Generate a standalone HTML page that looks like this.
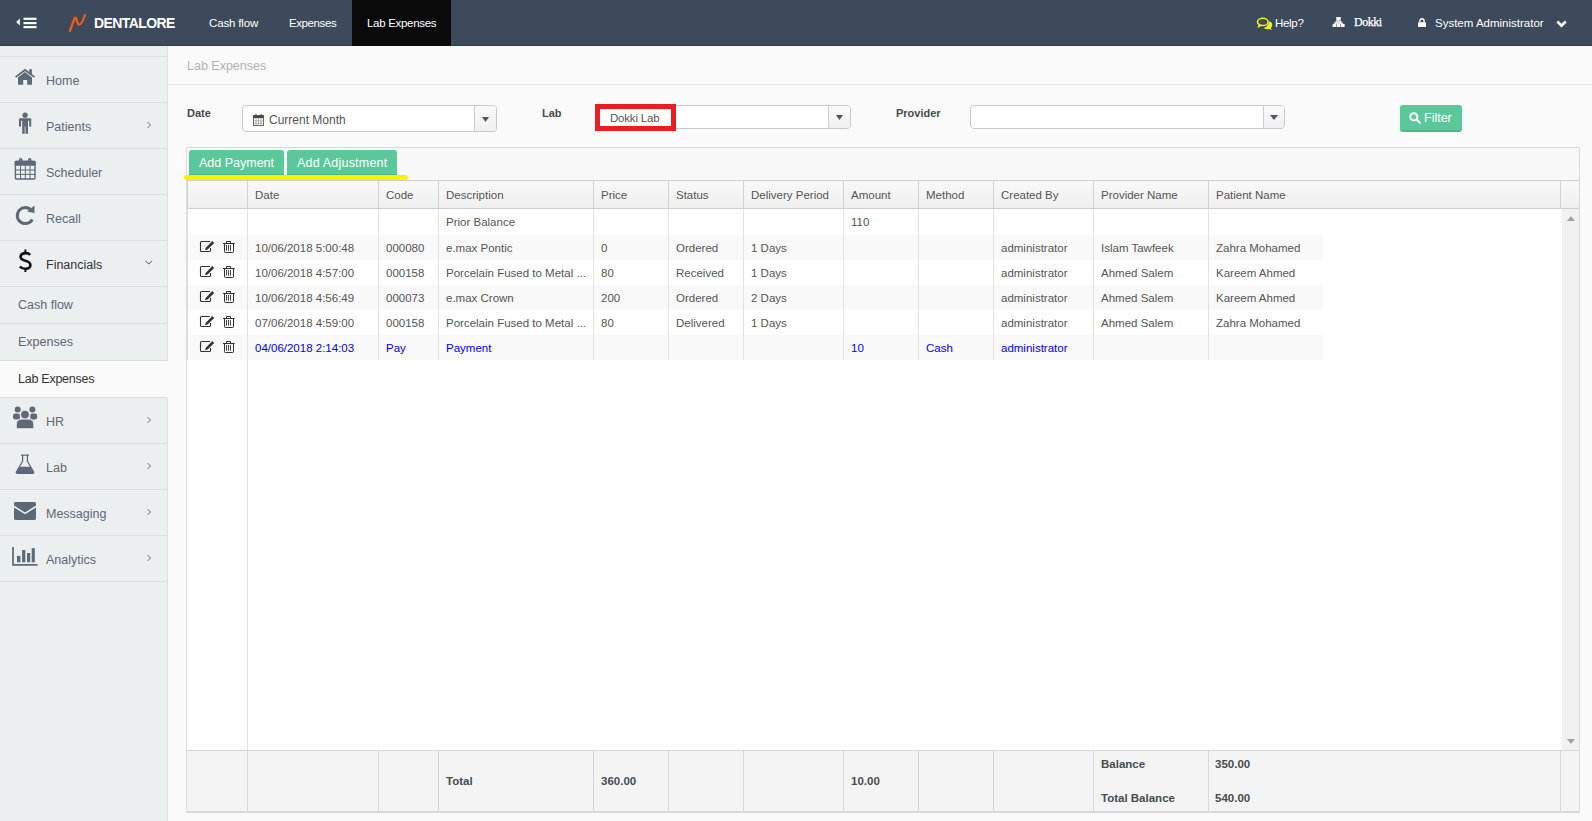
<!DOCTYPE html>
<html><head><meta charset="utf-8">
<style>
*{box-sizing:border-box;margin:0;padding:0}
html,body{width:1592px;height:821px;overflow:hidden}
body{background:#fafafa;font-family:"Liberation Sans",sans-serif;position:relative}
.abs{position:absolute}
svg.abs{display:block;overflow:visible}
.t{position:absolute;white-space:nowrap;line-height:1}
</style></head><body>
<div class="abs" style="left:0px;top:0px;width:1592px;height:45px;background:#3d4a5c;"></div>
<div class="abs" style="left:0px;top:45px;width:1592px;height:1px;background:#323d4c;"></div>
<div class="abs" style="left:352px;top:0px;width:99px;height:46px;background:#0a0a0a;"></div>
<svg class="abs" style="left:16px;top:17px" width="22" height="12" viewBox="0 0 22 12">
<path d="M0.2 5 L3.8 1.5 V8.5 Z" fill="#fff"/>
<rect x="7.5" y="0.7" width="13" height="2.2" fill="#fff"/>
<rect x="7.5" y="5" width="13" height="2.2" fill="#fff"/>
<rect x="7.5" y="9" width="13" height="2.2" fill="#fff"/></svg>
<svg class="abs" style="left:64px;top:10px" width="28" height="26" viewBox="0 0 28 26">
<path d="M5.9 21 L10.4 8.6 C10.9 7.3 12 7.3 12.4 8.8 C13 11.5 13.6 14.6 15.2 14.6 C17.6 14.6 19.6 9 20.9 5" stroke="#f25a14" stroke-width="2.3" fill="none" stroke-linecap="round" stroke-linejoin="round"/></svg>
<div class="t" style="left:94px;top:16.15px;font-size:14px;color:#fff;font-weight:bold;font-family:'Liberation Sans',sans-serif;letter-spacing:-0.6px">DENTALORE</div>
<div class="t" style="left:209px;top:18.27px;font-size:11.5px;color:#fff;font-weight:normal;font-family:'Liberation Sans',sans-serif;letter-spacing:-0.15px">Cash flow</div>
<div class="t" style="left:289px;top:18.27px;font-size:11.5px;color:#fff;font-weight:normal;font-family:'Liberation Sans',sans-serif;letter-spacing:-0.4px">Expenses</div>
<div class="t" style="left:367px;top:18.27px;font-size:11.5px;color:#fff;font-weight:normal;font-family:'Liberation Sans',sans-serif;letter-spacing:-0.3px">Lab Expenses</div>
<svg class="abs" style="left:1256px;top:17px" width="17" height="14" viewBox="0 0 17 14">
<path d="M7.5 11.3 C9.5 12.3 12 12.4 13.3 12 L15.6 13.2 L14.9 11 C16.1 10 16.4 8.5 16.1 7 C15.7 5.5 14.6 4.4 13.1 3.9 C13.2 7 11 10 7.5 11.3 Z" fill="#eef21a"/>
<ellipse cx="6.8" cy="4.9" rx="5.3" ry="3.6" stroke="#eef21a" stroke-width="1.6" fill="none"/>
<path d="M2.6 7.3 L1.4 11 L6 8.7 Z" fill="#eef21a"/>
</svg>
<div class="t" style="left:1275px;top:18.27px;font-size:11.5px;color:#fff;font-weight:normal;font-family:'Liberation Sans',sans-serif;letter-spacing:-0.3px">Help?</div>
<svg class="abs" style="left:1332px;top:17px" width="13" height="10" viewBox="0 0 13 10">
<rect x="4.3" y="0" width="4.4" height="3.6" fill="#fff"/>
<path d="M4.3 3.6 H8.7 L11.5 7 H1.5 Z" fill="#dfe2e8"/>
<rect x="0.6" y="7" width="3.6" height="3" fill="#fff"/><rect x="4.7" y="7" width="3.6" height="3" fill="#fff"/><rect x="8.8" y="7" width="3.8" height="3" fill="#fff"/>
</svg>
<div class="t" style="left:1354px;top:15.84px;font-size:12px;color:#fff;font-weight:normal;font-family:'Liberation Serif',serif;letter-spacing:-0.45px;-webkit-text-stroke:0.25px #fff">Dokki</div>
<svg class="abs" style="left:1418px;top:18px" width="8" height="10" viewBox="0 0 8 10">
<path d="M1.9 4.5 V3 C1.9 1.4 2.8 0.7 4 0.7 C5.2 0.7 6.1 1.4 6.1 3 V4.5" stroke="#fff" stroke-width="1.4" fill="none"/>
<rect x="0" y="4.2" width="8" height="4.9" rx="0.6" fill="#fff"/></svg>
<div class="t" style="left:1435px;top:18.27px;font-size:11.5px;color:#fff;font-weight:normal;font-family:'Liberation Sans',sans-serif;">System Administrator</div>
<svg class="abs" style="left:1556px;top:20px" width="11" height="8" viewBox="0 0 11 8">
<path d="M1.3 1.5 L5.5 5.7 L9.7 1.5" stroke="#fff" stroke-width="2.6" fill="none"/></svg>
<div class="abs" style="left:0px;top:46px;width:167px;height:775px;background:#ebeff0;"></div>
<div class="abs" style="left:167px;top:46px;width:1px;height:775px;background:#dde1e4;"></div>
<div class="abs" style="left:0px;top:56px;width:167px;height:1px;background:#dadee1;"></div>
<div class="abs" style="left:0px;top:102px;width:167px;height:1px;background:#dadee1;"></div>
<div class="t" style="left:46px;top:75.42px;font-size:12.5px;color:#5f6875;font-weight:normal;font-family:'Liberation Sans',sans-serif;">Home</div>
<div class="abs" style="left:0px;top:148px;width:167px;height:1px;background:#dadee1;"></div>
<div class="t" style="left:46px;top:121.42px;font-size:12.5px;color:#5f6875;font-weight:normal;font-family:'Liberation Sans',sans-serif;">Patients</div>
<div class="abs" style="left:0px;top:194px;width:167px;height:1px;background:#dadee1;"></div>
<div class="t" style="left:46px;top:167.42px;font-size:12.5px;color:#5f6875;font-weight:normal;font-family:'Liberation Sans',sans-serif;">Scheduler</div>
<div class="abs" style="left:0px;top:240px;width:167px;height:1px;background:#dadee1;"></div>
<div class="t" style="left:46px;top:213.42px;font-size:12.5px;color:#5f6875;font-weight:normal;font-family:'Liberation Sans',sans-serif;">Recall</div>
<div class="abs" style="left:0px;top:286px;width:167px;height:1px;background:#dadee1;"></div>
<div class="t" style="left:46px;top:259.42px;font-size:12.5px;color:#333;font-weight:normal;font-family:'Liberation Sans',sans-serif;">Financials</div>
<div class="abs" style="left:0px;top:323px;width:167px;height:1px;background:#dadee1;"></div>
<div class="abs" style="left:0px;top:360px;width:167px;height:1px;background:#dadee1;"></div>
<div class="abs" style="left:0px;top:361px;width:168px;height:36px;background:#fafafa;"></div>
<div class="abs" style="left:0px;top:397px;width:167px;height:1px;background:#dadee1;"></div>
<div class="t" style="left:18px;top:299.42px;font-size:12.5px;color:#5f6875;font-weight:normal;font-family:'Liberation Sans',sans-serif;">Cash flow</div>
<div class="t" style="left:18px;top:336.42px;font-size:12.5px;color:#5f6875;font-weight:normal;font-family:'Liberation Sans',sans-serif;">Expenses</div>
<div class="t" style="left:18px;top:373.42px;font-size:12.5px;color:#333;font-weight:normal;font-family:'Liberation Sans',sans-serif;letter-spacing:-0.25px">Lab Expenses</div>
<div class="abs" style="left:0px;top:443px;width:167px;height:1px;background:#dadee1;"></div>
<div class="t" style="left:46px;top:416.42px;font-size:12.5px;color:#5f6875;font-weight:normal;font-family:'Liberation Sans',sans-serif;">HR</div>
<div class="abs" style="left:0px;top:489px;width:167px;height:1px;background:#dadee1;"></div>
<div class="t" style="left:46px;top:462.42px;font-size:12.5px;color:#5f6875;font-weight:normal;font-family:'Liberation Sans',sans-serif;">Lab</div>
<div class="abs" style="left:0px;top:535px;width:167px;height:1px;background:#dadee1;"></div>
<div class="t" style="left:46px;top:508.42px;font-size:12.5px;color:#5f6875;font-weight:normal;font-family:'Liberation Sans',sans-serif;">Messaging</div>
<div class="abs" style="left:0px;top:581px;width:167px;height:1px;background:#dadee1;"></div>
<div class="t" style="left:46px;top:554.42px;font-size:12.5px;color:#5f6875;font-weight:normal;font-family:'Liberation Sans',sans-serif;">Analytics</div>
<svg class="abs" style="left:146px;top:121px" width="6" height="8" viewBox="0 0 6 8"><path d="M1.5 1 L4.5 4 L1.5 7" stroke="#5f6876" stroke-width="0.95" fill="none"/></svg>
<svg class="abs" style="left:146px;top:416px" width="6" height="8" viewBox="0 0 6 8"><path d="M1.5 1 L4.5 4 L1.5 7" stroke="#5f6876" stroke-width="0.95" fill="none"/></svg>
<svg class="abs" style="left:146px;top:462px" width="6" height="8" viewBox="0 0 6 8"><path d="M1.5 1 L4.5 4 L1.5 7" stroke="#5f6876" stroke-width="0.95" fill="none"/></svg>
<svg class="abs" style="left:146px;top:508px" width="6" height="8" viewBox="0 0 6 8"><path d="M1.5 1 L4.5 4 L1.5 7" stroke="#5f6876" stroke-width="0.95" fill="none"/></svg>
<svg class="abs" style="left:146px;top:554px" width="6" height="8" viewBox="0 0 6 8"><path d="M1.5 1 L4.5 4 L1.5 7" stroke="#5f6876" stroke-width="0.95" fill="none"/></svg>
<svg class="abs" style="left:145px;top:260px" width="8" height="6" viewBox="0 0 8 6"><path d="M0.7 0.9 L3.7 4.1 L6.9 0.9" stroke="#3f4654" stroke-width="0.95" fill="none"/></svg>
<svg class="abs" style="left:15px;top:69px" width="21" height="17" viewBox="0 0 21 17">
<path d="M0.6 8.1 L10 1 L19.5 8.1" stroke="#5f6876" stroke-width="1.8" fill="none"/>
<rect x="14.2" y="0.2" width="2.7" height="5" fill="#5f6876"/>
<path d="M3 8.4 L10 3.1 L17 8.4 V15.8 H12.2 V10.9 H8.2 V15.8 H3 Z" fill="#5f6876"/></svg>
<svg class="abs" style="left:19px;top:112px" width="13" height="22" viewBox="0 0 13 22">
<circle cx="6.1" cy="3.2" r="2.6" fill="#5f6876"/>
<rect x="0" y="6.2" width="12.2" height="2.6" rx="1" fill="#5f6876"/>
<rect x="0" y="7" width="2" height="7.6" fill="#5f6876"/>
<rect x="10.2" y="7" width="2" height="7.6" fill="#5f6876"/>
<path d="M3.2 7 H9 V21.8 H6.5 V14.6 H5.7 V21.8 H3.2 Z" fill="#5f6876"/></svg>
<svg class="abs" style="left:14px;top:158px" width="22" height="22" viewBox="0 0 22 22">
<rect x="1.4" y="3.4" width="19.6" height="17.6" rx="1" fill="none" stroke="#5f6876" stroke-width="1.4"/>
<rect x="0.7" y="2.7" width="21" height="5" rx="1" fill="#5f6876"/>
<path d="M5.6 4.5 V2.2 Q5.6 0.7 6.7 0.7 Q7.8 0.7 7.8 2.2 V4.5 M14.6 4.5 V2.2 Q14.6 0.7 15.7 0.7 Q16.8 0.7 16.8 2.2 V4.5" stroke="#5f6876" stroke-width="1.5" fill="none"/>
<path d="M6.5 7.5 V21 M11.3 7.5 V21 M16 7.5 V21 M1 12 H21 M1 16.4 H21" stroke="#5f6876" stroke-width="1"/></svg>
<svg class="abs" style="left:15px;top:205px" width="21" height="20" viewBox="0 0 21 20">
<path d="M16.5 5.5 A8 8 0 1 0 17.3 14.5" stroke="#5f6876" stroke-width="3" fill="none"/>
<path d="M12 6.5 L19.5 0.5 L19.5 8 Z" fill="#5f6876"/></svg>
<svg class="abs" style="left:18px;top:249px" width="14" height="23" viewBox="0 0 14 23">
<path d="M12.2 5.8 C11.2 4.6 9.5 4.1 7.4 4.1 C4.5 4.1 2.6 5.6 2.6 7.9 C2.6 10.3 5 11 7.4 11.7 C10.4 12.5 12.4 13.5 12.4 16 C12.4 18.4 10.4 19.8 7.4 19.8 C5.2 19.8 3.2 19 1.9 17.5" stroke="#111" stroke-width="2.6" fill="none"/>
<path d="M7.4 0.5 V4.5 M7.4 19.5 V23" stroke="#111" stroke-width="2"/></svg>
<svg class="abs" style="left:13px;top:406px" width="25" height="23" viewBox="0 0 25 23">
<circle cx="4.7" cy="3.6" r="3" fill="#5f6876"/><circle cx="19.4" cy="3.6" r="3" fill="#5f6876"/>
<rect x="0" y="7.6" width="7" height="6" rx="2.4" fill="#5f6876"/><rect x="17.2" y="7.6" width="7" height="6" rx="2.4" fill="#5f6876"/>
<circle cx="12" cy="8.6" r="4.4" fill="#5f6876" stroke="#ebeff0" stroke-width="0.9"/>
<path d="M3.3 22.7 V18.2 C3.3 14.6 6 13.1 9 13.1 H15 C18 13.1 20.8 14.6 20.8 18.2 V22.7 Z" fill="#5f6876" stroke="#ebeff0" stroke-width="0.9"/></svg>
<svg class="abs" style="left:15px;top:454px" width="20" height="20" viewBox="0 0 20 20">
<path d="M6 1.2 H14 M7.6 1.5 V7.2 L1.5 17.8 C1 18.8 1.4 19.3 2.4 19.3 H17.6 C18.6 19.3 19 18.8 18.5 17.8 L12.4 7.2 V1.5" stroke="#5f6876" stroke-width="1.3" fill="none"/>
<path d="M4.6 12.8 H15.4 L18.6 18 C19 18.8 18.7 19.4 17.8 19.4 H2.2 C1.3 19.4 1 18.8 1.4 18 Z" fill="#5f6876"/></svg>
<svg class="abs" style="left:14px;top:502px" width="22" height="18" viewBox="0 0 22 18">
<path d="M1.5 0 H20.5 C21.3 0 22 0.7 22 1.5 V3.5 L11 10.5 L0 3.5 V1.5 C0 0.7 0.7 0 1.5 0 Z" fill="#5f6876"/>
<path d="M0 5.5 L11 12.3 L22 5.5 V16.5 C22 17.3 21.3 18 20.5 18 H1.5 C0.7 18 0 17.3 0 16.5 Z" fill="#5f6876"/></svg>
<svg class="abs" style="left:12px;top:546px" width="26" height="21" viewBox="0 0 26 21">
<path d="M1 1 V18.8 H25.5" stroke="#5f6876" stroke-width="1.7" fill="none"/>
<rect x="5" y="9.9" width="3.4" height="6.4" fill="#5f6876"/><rect x="10.1" y="4" width="3.2" height="12.3" fill="#5f6876"/>
<rect x="15" y="7" width="3.2" height="9.3" fill="#5f6876"/><rect x="19.7" y="2.1" width="3.1" height="14.2" fill="#5f6876"/></svg>
<div class="t" style="left:187px;top:60.42px;font-size:12.5px;color:#b3b3b3;font-weight:normal;font-family:'Liberation Sans',sans-serif;">Lab Expenses</div>
<div class="abs" style="left:168px;top:84px;width:1424px;height:1px;background:#e5e5e5;"></div>
<div class="t" style="left:187px;top:107.69px;font-size:11px;color:#4a4a4a;font-weight:bold;font-family:'Liberation Sans',sans-serif;">Date</div>
<div class="t" style="left:542px;top:107.69px;font-size:11px;color:#4a4a4a;font-weight:bold;font-family:'Liberation Sans',sans-serif;">Lab</div>
<div class="t" style="left:896px;top:107.69px;font-size:11px;color:#4a4a4a;font-weight:bold;font-family:'Liberation Sans',sans-serif;">Provider</div>
<div class="abs" style="left:242px;top:105px;width:255px;height:27px;background:#fff;border:1px solid #c9c9c9;border-radius:4px"></div>
<div class="abs" style="left:475px;top:106px;width:21px;height:25px;background:linear-gradient(#fafafa,#f0f0f0);border-radius:0 3px 3px 0"></div>
<div class="abs" style="left:474px;top:106px;width:1px;height:25px;background:#cfcfcf;"></div>
<svg class="abs" style="left:482px;top:117px" width="7" height="5" viewBox="0 0 7 5"><path d="M0 0 H7 L3.5 5 Z" fill="#4c5563"/></svg>
<svg class="abs" style="left:253px;top:114px" width="11" height="12" viewBox="0 0 11 12">
<rect x="0.5" y="1.5" width="10" height="10" fill="none" stroke="#5a5a5a" stroke-width="0.9"/>
<rect x="0.3" y="1.5" width="10.4" height="2.6" fill="#4a4a4a"/>
<rect x="2.3" y="0" width="1.2" height="2.4" rx="0.5" fill="#555"/><rect x="7.5" y="0" width="1.2" height="2.4" rx="0.5" fill="#555"/>
<path d="M0.5 6.8 H10.5 M0.5 9.2 H10.5 M3 4 V11.5 M5.5 4 V11.5 M8 4 V11.5" stroke="#8a8a8a" stroke-width="0.6"/></svg>
<div class="t" style="left:269px;top:113.84px;font-size:12px;color:#555;font-weight:normal;font-family:'Liberation Sans',sans-serif;">Current Month</div>
<div class="abs" style="left:596px;top:105px;width:255px;height:24px;background:#fff;border:1px solid #c9c9c9;border-radius:4px"></div>
<div class="abs" style="left:829px;top:106px;width:21px;height:22px;background:linear-gradient(#fafafa,#f0f0f0);border-radius:0 3px 3px 0"></div>
<div class="abs" style="left:828px;top:106px;width:1px;height:22px;background:#cfcfcf;"></div>
<svg class="abs" style="left:836px;top:115px" width="7" height="5" viewBox="0 0 7 5"><path d="M0 0 H7 L3.5 5 Z" fill="#4c5563"/></svg>
<div class="abs" style="left:595px;top:104px;width:81px;height:27px;background:#fff;border:5px solid #ec1c24"></div>
<div class="t" style="left:610px;top:113.27px;font-size:11.5px;color:#555;font-weight:normal;font-family:'Liberation Sans',sans-serif;letter-spacing:-0.2px">Dokki Lab</div>
<div class="abs" style="left:970px;top:105px;width:315px;height:24px;background:#fff;border:1px solid #c9c9c9;border-radius:4px"></div>
<div class="abs" style="left:1264px;top:106px;width:20px;height:22px;background:linear-gradient(#fafafa,#f0f0f0);border-radius:0 3px 3px 0"></div>
<div class="abs" style="left:1263px;top:106px;width:1px;height:22px;background:#cfcfcf;"></div>
<svg class="abs" style="left:1270px;top:115px" width="8" height="5" viewBox="0 0 8 5"><path d="M0 0 H8 L4.0 5 Z" fill="#4c5563"/></svg>
<div class="abs" style="left:1400px;top:105px;width:62px;height:27px;background:#5bc89c;border-radius:3px;border-bottom:2px solid #4db889"></div>
<svg class="abs" style="left:1409px;top:112px" width="12" height="12" viewBox="0 0 12 12">
<circle cx="4.8" cy="4.8" r="3.6" stroke="#fff" stroke-width="1.9" fill="none"/>
<path d="M7.5 7.5 L10.8 10.8" stroke="#fff" stroke-width="2.2" stroke-linecap="round"/></svg>
<div class="t" style="left:1424px;top:112.42px;font-size:12.5px;color:#fff;font-weight:normal;font-family:'Liberation Sans',sans-serif;">Filter</div>
<div class="abs" style="left:186px;top:147px;width:1394px;height:666px;background:linear-gradient(#f8f8f8,#f3f3f3);border:1px solid #d9d9d9;border-left-color:#dedede;border-bottom:2px solid #d8d8da"></div>
<div class="abs" style="left:189px;top:150px;width:95px;height:25px;background:#5bc89c;border-radius:3px 3px 0 0;border-bottom:1px solid #4fb58b"></div>
<div class="abs" style="left:287px;top:150px;width:110px;height:25px;background:#5bc89c;border-radius:3px 3px 0 0;border-bottom:1px solid #4fb58b"></div>
<div class="t" style="left:199px;top:157.42px;font-size:12.5px;color:#fff;font-weight:normal;font-family:'Liberation Sans',sans-serif;">Add Payment</div>
<div class="t" style="left:297px;top:157.42px;font-size:12.5px;color:#fff;font-weight:normal;font-family:'Liberation Sans',sans-serif;letter-spacing:0.2px">Add Adjustment</div>
<div class="abs" style="left:184px;top:175px;width:224px;height:5px;background:#fff200;border-radius:3px"></div>
<div class="abs" style="left:187px;top:180px;width:1392px;height:29px;background:linear-gradient(#f9f9f9,#efefef);"></div>
<div class="abs" style="left:186px;top:180px;width:1394px;height:1px;background:#d0d0d4;"></div>
<div class="abs" style="left:187px;top:208px;width:1392px;height:1px;background:#cfcfd3;"></div>
<div class="abs" style="left:247px;top:181px;width:1px;height:27px;background:#d2d2d6;"></div>
<div class="abs" style="left:378px;top:181px;width:1px;height:27px;background:#d2d2d6;"></div>
<div class="abs" style="left:438px;top:181px;width:1px;height:27px;background:#d2d2d6;"></div>
<div class="abs" style="left:593px;top:181px;width:1px;height:27px;background:#d2d2d6;"></div>
<div class="abs" style="left:668px;top:181px;width:1px;height:27px;background:#d2d2d6;"></div>
<div class="abs" style="left:743px;top:181px;width:1px;height:27px;background:#d2d2d6;"></div>
<div class="abs" style="left:843px;top:181px;width:1px;height:27px;background:#d2d2d6;"></div>
<div class="abs" style="left:918px;top:181px;width:1px;height:27px;background:#d2d2d6;"></div>
<div class="abs" style="left:993px;top:181px;width:1px;height:27px;background:#d2d2d6;"></div>
<div class="abs" style="left:1093px;top:181px;width:1px;height:27px;background:#d2d2d6;"></div>
<div class="abs" style="left:1208px;top:181px;width:1px;height:27px;background:#d2d2d6;"></div>
<div class="abs" style="left:1560px;top:181px;width:1px;height:27px;background:#d2d2d6;"></div>
<div class="abs" style="left:187px;top:180px;width:1px;height:29px;background:#cfcfd3;"></div>
<div class="abs" style="left:187px;top:750px;width:1px;height:62px;background:#cfcfd3;"></div>
<div class="t" style="left:255px;top:190.27px;font-size:11.5px;color:#555;font-weight:normal;font-family:'Liberation Sans',sans-serif;">Date</div>
<div class="t" style="left:386px;top:190.27px;font-size:11.5px;color:#555;font-weight:normal;font-family:'Liberation Sans',sans-serif;">Code</div>
<div class="t" style="left:446px;top:190.27px;font-size:11.5px;color:#555;font-weight:normal;font-family:'Liberation Sans',sans-serif;">Description</div>
<div class="t" style="left:601px;top:190.27px;font-size:11.5px;color:#555;font-weight:normal;font-family:'Liberation Sans',sans-serif;">Price</div>
<div class="t" style="left:676px;top:190.27px;font-size:11.5px;color:#555;font-weight:normal;font-family:'Liberation Sans',sans-serif;">Status</div>
<div class="t" style="left:751px;top:190.27px;font-size:11.5px;color:#555;font-weight:normal;font-family:'Liberation Sans',sans-serif;">Delivery Period</div>
<div class="t" style="left:851px;top:190.27px;font-size:11.5px;color:#555;font-weight:normal;font-family:'Liberation Sans',sans-serif;">Amount</div>
<div class="t" style="left:926px;top:190.27px;font-size:11.5px;color:#555;font-weight:normal;font-family:'Liberation Sans',sans-serif;">Method</div>
<div class="t" style="left:1001px;top:190.27px;font-size:11.5px;color:#555;font-weight:normal;font-family:'Liberation Sans',sans-serif;">Created By</div>
<div class="t" style="left:1101px;top:190.27px;font-size:11.5px;color:#555;font-weight:normal;font-family:'Liberation Sans',sans-serif;">Provider Name</div>
<div class="t" style="left:1216px;top:190.27px;font-size:11.5px;color:#555;font-weight:normal;font-family:'Liberation Sans',sans-serif;">Patient Name</div>
<div class="abs" style="left:187px;top:209px;width:1375px;height:541px;background:#fff;"></div>
<div class="abs" style="left:187px;top:209px;width:1px;height:151px;background:#dcdcdc;"></div>
<div class="abs" style="left:1562px;top:209px;width:17px;height:541px;background:#f1f1f1;"></div>
<svg class="abs" style="left:1567px;top:216px" width="8" height="5" viewBox="0 0 8 5"><path d="M0 5 H8 L4 0 Z" fill="#a3a3a3"/></svg>
<svg class="abs" style="left:1567px;top:739px" width="8" height="5" viewBox="0 0 8 5"><path d="M0 0 H8 L4.0 5 Z" fill="#a3a3a3"/></svg>
<div class="t" style="left:446px;top:217.27px;font-size:11.5px;color:#555;font-weight:normal;font-family:'Liberation Sans',sans-serif;">Prior Balance</div>
<div class="t" style="left:851px;top:217.27px;font-size:11.5px;color:#555;font-weight:normal;font-family:'Liberation Sans',sans-serif;">110</div>
<div class="abs" style="left:188px;top:235px;width:59px;height:25px;background:#f9f9f9;"></div>
<div class="abs" style="left:248px;top:235px;width:130px;height:25px;background:#f9f9f9;"></div>
<div class="abs" style="left:379px;top:235px;width:59px;height:25px;background:#f9f9f9;"></div>
<div class="abs" style="left:439px;top:235px;width:154px;height:25px;background:#f9f9f9;"></div>
<div class="abs" style="left:594px;top:235px;width:74px;height:25px;background:#f9f9f9;"></div>
<div class="abs" style="left:669px;top:235px;width:74px;height:25px;background:#f9f9f9;"></div>
<div class="abs" style="left:744px;top:235px;width:99px;height:25px;background:#f9f9f9;"></div>
<div class="abs" style="left:844px;top:235px;width:74px;height:25px;background:#f9f9f9;"></div>
<div class="abs" style="left:919px;top:235px;width:74px;height:25px;background:#f9f9f9;"></div>
<div class="abs" style="left:994px;top:235px;width:99px;height:25px;background:#f9f9f9;"></div>
<div class="abs" style="left:1094px;top:235px;width:114px;height:25px;background:#f9f9f9;"></div>
<div class="abs" style="left:1209px;top:235px;width:114px;height:25px;background:#f9f9f9;"></div>
<div class="t" style="left:255px;top:243.27px;font-size:11.5px;color:#555;font-weight:normal;font-family:'Liberation Sans',sans-serif;">10/06/2018 5:00:48</div>
<div class="t" style="left:386px;top:243.27px;font-size:11.5px;color:#555;font-weight:normal;font-family:'Liberation Sans',sans-serif;">000080</div>
<div class="t" style="left:446px;top:243.27px;font-size:11.5px;color:#555;font-weight:normal;font-family:'Liberation Sans',sans-serif;">e.max Pontic</div>
<div class="t" style="left:601px;top:243.27px;font-size:11.5px;color:#555;font-weight:normal;font-family:'Liberation Sans',sans-serif;">0</div>
<div class="t" style="left:676px;top:243.27px;font-size:11.5px;color:#555;font-weight:normal;font-family:'Liberation Sans',sans-serif;">Ordered</div>
<div class="t" style="left:751px;top:243.27px;font-size:11.5px;color:#555;font-weight:normal;font-family:'Liberation Sans',sans-serif;">1 Days</div>
<div class="t" style="left:1001px;top:243.27px;font-size:11.5px;color:#555;font-weight:normal;font-family:'Liberation Sans',sans-serif;">administrator</div>
<div class="t" style="left:1101px;top:243.27px;font-size:11.5px;color:#555;font-weight:normal;font-family:'Liberation Sans',sans-serif;">Islam Tawfeek</div>
<div class="t" style="left:1216px;top:243.27px;font-size:11.5px;color:#555;font-weight:normal;font-family:'Liberation Sans',sans-serif;">Zahra Mohamed</div>
<svg class="abs" style="left:200px;top:241px" width="15" height="12" viewBox="0 0 15 12">
<path d="M10 0.5 H1.6 Q0.5 0.5 0.5 1.6 V9.4 Q0.5 10.5 1.6 10.5 H9.4 Q10.5 10.5 10.5 9.4 V7" stroke="#333" stroke-width="1.1" fill="none"/>
<path d="M12.3 0 L14.2 1.9 L7.6 8.5 L5 9.3 L5.8 6.7 Z" fill="#333"/></svg>
<svg class="abs" style="left:223px;top:241px" width="12" height="13" viewBox="0 0 12 13">
<path d="M3.5 2.3 V0.5 H7.5 V2.3" stroke="#333" stroke-width="1" fill="none"/>
<path d="M0 2.5 H11.7" stroke="#333" stroke-width="1.1"/>
<path d="M1.5 3 V10.7 Q1.5 11.5 2.3 11.5 H9.7 Q10.5 11.5 10.5 10.7 V3" stroke="#333" stroke-width="1" fill="none"/>
<path d="M3.5 4 V9.7 M5.5 4 V9.7 M7.5 4 V9.7" stroke="#333" stroke-width="0.9"/></svg>
<div class="t" style="left:255px;top:268.27px;font-size:11.5px;color:#555;font-weight:normal;font-family:'Liberation Sans',sans-serif;">10/06/2018 4:57:00</div>
<div class="t" style="left:386px;top:268.27px;font-size:11.5px;color:#555;font-weight:normal;font-family:'Liberation Sans',sans-serif;">000158</div>
<div class="t" style="left:446px;top:268.27px;font-size:11.5px;color:#555;font-weight:normal;font-family:'Liberation Sans',sans-serif;">Porcelain Fused to Metal ...</div>
<div class="t" style="left:601px;top:268.27px;font-size:11.5px;color:#555;font-weight:normal;font-family:'Liberation Sans',sans-serif;">80</div>
<div class="t" style="left:676px;top:268.27px;font-size:11.5px;color:#555;font-weight:normal;font-family:'Liberation Sans',sans-serif;">Received</div>
<div class="t" style="left:751px;top:268.27px;font-size:11.5px;color:#555;font-weight:normal;font-family:'Liberation Sans',sans-serif;">1 Days</div>
<div class="t" style="left:1001px;top:268.27px;font-size:11.5px;color:#555;font-weight:normal;font-family:'Liberation Sans',sans-serif;">administrator</div>
<div class="t" style="left:1101px;top:268.27px;font-size:11.5px;color:#555;font-weight:normal;font-family:'Liberation Sans',sans-serif;">Ahmed Salem</div>
<div class="t" style="left:1216px;top:268.27px;font-size:11.5px;color:#555;font-weight:normal;font-family:'Liberation Sans',sans-serif;">Kareem Ahmed</div>
<svg class="abs" style="left:200px;top:266px" width="15" height="12" viewBox="0 0 15 12">
<path d="M10 0.5 H1.6 Q0.5 0.5 0.5 1.6 V9.4 Q0.5 10.5 1.6 10.5 H9.4 Q10.5 10.5 10.5 9.4 V7" stroke="#333" stroke-width="1.1" fill="none"/>
<path d="M12.3 0 L14.2 1.9 L7.6 8.5 L5 9.3 L5.8 6.7 Z" fill="#333"/></svg>
<svg class="abs" style="left:223px;top:266px" width="12" height="13" viewBox="0 0 12 13">
<path d="M3.5 2.3 V0.5 H7.5 V2.3" stroke="#333" stroke-width="1" fill="none"/>
<path d="M0 2.5 H11.7" stroke="#333" stroke-width="1.1"/>
<path d="M1.5 3 V10.7 Q1.5 11.5 2.3 11.5 H9.7 Q10.5 11.5 10.5 10.7 V3" stroke="#333" stroke-width="1" fill="none"/>
<path d="M3.5 4 V9.7 M5.5 4 V9.7 M7.5 4 V9.7" stroke="#333" stroke-width="0.9"/></svg>
<div class="abs" style="left:188px;top:285px;width:59px;height:25px;background:#f9f9f9;"></div>
<div class="abs" style="left:248px;top:285px;width:130px;height:25px;background:#f9f9f9;"></div>
<div class="abs" style="left:379px;top:285px;width:59px;height:25px;background:#f9f9f9;"></div>
<div class="abs" style="left:439px;top:285px;width:154px;height:25px;background:#f9f9f9;"></div>
<div class="abs" style="left:594px;top:285px;width:74px;height:25px;background:#f9f9f9;"></div>
<div class="abs" style="left:669px;top:285px;width:74px;height:25px;background:#f9f9f9;"></div>
<div class="abs" style="left:744px;top:285px;width:99px;height:25px;background:#f9f9f9;"></div>
<div class="abs" style="left:844px;top:285px;width:74px;height:25px;background:#f9f9f9;"></div>
<div class="abs" style="left:919px;top:285px;width:74px;height:25px;background:#f9f9f9;"></div>
<div class="abs" style="left:994px;top:285px;width:99px;height:25px;background:#f9f9f9;"></div>
<div class="abs" style="left:1094px;top:285px;width:114px;height:25px;background:#f9f9f9;"></div>
<div class="abs" style="left:1209px;top:285px;width:114px;height:25px;background:#f9f9f9;"></div>
<div class="t" style="left:255px;top:293.27px;font-size:11.5px;color:#555;font-weight:normal;font-family:'Liberation Sans',sans-serif;">10/06/2018 4:56:49</div>
<div class="t" style="left:386px;top:293.27px;font-size:11.5px;color:#555;font-weight:normal;font-family:'Liberation Sans',sans-serif;">000073</div>
<div class="t" style="left:446px;top:293.27px;font-size:11.5px;color:#555;font-weight:normal;font-family:'Liberation Sans',sans-serif;">e.max Crown</div>
<div class="t" style="left:601px;top:293.27px;font-size:11.5px;color:#555;font-weight:normal;font-family:'Liberation Sans',sans-serif;">200</div>
<div class="t" style="left:676px;top:293.27px;font-size:11.5px;color:#555;font-weight:normal;font-family:'Liberation Sans',sans-serif;">Ordered</div>
<div class="t" style="left:751px;top:293.27px;font-size:11.5px;color:#555;font-weight:normal;font-family:'Liberation Sans',sans-serif;">2 Days</div>
<div class="t" style="left:1001px;top:293.27px;font-size:11.5px;color:#555;font-weight:normal;font-family:'Liberation Sans',sans-serif;">administrator</div>
<div class="t" style="left:1101px;top:293.27px;font-size:11.5px;color:#555;font-weight:normal;font-family:'Liberation Sans',sans-serif;">Ahmed Salem</div>
<div class="t" style="left:1216px;top:293.27px;font-size:11.5px;color:#555;font-weight:normal;font-family:'Liberation Sans',sans-serif;">Kareem Ahmed</div>
<svg class="abs" style="left:200px;top:291px" width="15" height="12" viewBox="0 0 15 12">
<path d="M10 0.5 H1.6 Q0.5 0.5 0.5 1.6 V9.4 Q0.5 10.5 1.6 10.5 H9.4 Q10.5 10.5 10.5 9.4 V7" stroke="#333" stroke-width="1.1" fill="none"/>
<path d="M12.3 0 L14.2 1.9 L7.6 8.5 L5 9.3 L5.8 6.7 Z" fill="#333"/></svg>
<svg class="abs" style="left:223px;top:291px" width="12" height="13" viewBox="0 0 12 13">
<path d="M3.5 2.3 V0.5 H7.5 V2.3" stroke="#333" stroke-width="1" fill="none"/>
<path d="M0 2.5 H11.7" stroke="#333" stroke-width="1.1"/>
<path d="M1.5 3 V10.7 Q1.5 11.5 2.3 11.5 H9.7 Q10.5 11.5 10.5 10.7 V3" stroke="#333" stroke-width="1" fill="none"/>
<path d="M3.5 4 V9.7 M5.5 4 V9.7 M7.5 4 V9.7" stroke="#333" stroke-width="0.9"/></svg>
<div class="t" style="left:255px;top:318.27px;font-size:11.5px;color:#555;font-weight:normal;font-family:'Liberation Sans',sans-serif;">07/06/2018 4:59:00</div>
<div class="t" style="left:386px;top:318.27px;font-size:11.5px;color:#555;font-weight:normal;font-family:'Liberation Sans',sans-serif;">000158</div>
<div class="t" style="left:446px;top:318.27px;font-size:11.5px;color:#555;font-weight:normal;font-family:'Liberation Sans',sans-serif;">Porcelain Fused to Metal ...</div>
<div class="t" style="left:601px;top:318.27px;font-size:11.5px;color:#555;font-weight:normal;font-family:'Liberation Sans',sans-serif;">80</div>
<div class="t" style="left:676px;top:318.27px;font-size:11.5px;color:#555;font-weight:normal;font-family:'Liberation Sans',sans-serif;">Delivered</div>
<div class="t" style="left:751px;top:318.27px;font-size:11.5px;color:#555;font-weight:normal;font-family:'Liberation Sans',sans-serif;">1 Days</div>
<div class="t" style="left:1001px;top:318.27px;font-size:11.5px;color:#555;font-weight:normal;font-family:'Liberation Sans',sans-serif;">administrator</div>
<div class="t" style="left:1101px;top:318.27px;font-size:11.5px;color:#555;font-weight:normal;font-family:'Liberation Sans',sans-serif;">Ahmed Salem</div>
<div class="t" style="left:1216px;top:318.27px;font-size:11.5px;color:#555;font-weight:normal;font-family:'Liberation Sans',sans-serif;">Zahra Mohamed</div>
<svg class="abs" style="left:200px;top:316px" width="15" height="12" viewBox="0 0 15 12">
<path d="M10 0.5 H1.6 Q0.5 0.5 0.5 1.6 V9.4 Q0.5 10.5 1.6 10.5 H9.4 Q10.5 10.5 10.5 9.4 V7" stroke="#333" stroke-width="1.1" fill="none"/>
<path d="M12.3 0 L14.2 1.9 L7.6 8.5 L5 9.3 L5.8 6.7 Z" fill="#333"/></svg>
<svg class="abs" style="left:223px;top:316px" width="12" height="13" viewBox="0 0 12 13">
<path d="M3.5 2.3 V0.5 H7.5 V2.3" stroke="#333" stroke-width="1" fill="none"/>
<path d="M0 2.5 H11.7" stroke="#333" stroke-width="1.1"/>
<path d="M1.5 3 V10.7 Q1.5 11.5 2.3 11.5 H9.7 Q10.5 11.5 10.5 10.7 V3" stroke="#333" stroke-width="1" fill="none"/>
<path d="M3.5 4 V9.7 M5.5 4 V9.7 M7.5 4 V9.7" stroke="#333" stroke-width="0.9"/></svg>
<div class="abs" style="left:188px;top:335px;width:59px;height:25px;background:#f9f9f9;"></div>
<div class="abs" style="left:248px;top:335px;width:130px;height:25px;background:#f9f9f9;"></div>
<div class="abs" style="left:379px;top:335px;width:59px;height:25px;background:#f9f9f9;"></div>
<div class="abs" style="left:439px;top:335px;width:154px;height:25px;background:#f9f9f9;"></div>
<div class="abs" style="left:594px;top:335px;width:74px;height:25px;background:#f9f9f9;"></div>
<div class="abs" style="left:669px;top:335px;width:74px;height:25px;background:#f9f9f9;"></div>
<div class="abs" style="left:744px;top:335px;width:99px;height:25px;background:#f9f9f9;"></div>
<div class="abs" style="left:844px;top:335px;width:74px;height:25px;background:#f9f9f9;"></div>
<div class="abs" style="left:919px;top:335px;width:74px;height:25px;background:#f9f9f9;"></div>
<div class="abs" style="left:994px;top:335px;width:99px;height:25px;background:#f9f9f9;"></div>
<div class="abs" style="left:1094px;top:335px;width:114px;height:25px;background:#f9f9f9;"></div>
<div class="abs" style="left:1209px;top:335px;width:114px;height:25px;background:#f9f9f9;"></div>
<div class="t" style="left:255px;top:343.27px;font-size:11.5px;color:#0000ff;font-weight:normal;font-family:'Liberation Sans',sans-serif;">04/06/2018 2:14:03</div>
<div class="t" style="left:386px;top:343.27px;font-size:11.5px;color:#0000ff;font-weight:normal;font-family:'Liberation Sans',sans-serif;">Pay</div>
<div class="t" style="left:446px;top:343.27px;font-size:11.5px;color:#0000ff;font-weight:normal;font-family:'Liberation Sans',sans-serif;">Payment</div>
<div class="t" style="left:851px;top:343.27px;font-size:11.5px;color:#0000ff;font-weight:normal;font-family:'Liberation Sans',sans-serif;">10</div>
<div class="t" style="left:926px;top:343.27px;font-size:11.5px;color:#0000ff;font-weight:normal;font-family:'Liberation Sans',sans-serif;">Cash</div>
<div class="t" style="left:1001px;top:343.27px;font-size:11.5px;color:#0000ff;font-weight:normal;font-family:'Liberation Sans',sans-serif;">administrator</div>
<svg class="abs" style="left:200px;top:341px" width="15" height="12" viewBox="0 0 15 12">
<path d="M10 0.5 H1.6 Q0.5 0.5 0.5 1.6 V9.4 Q0.5 10.5 1.6 10.5 H9.4 Q10.5 10.5 10.5 9.4 V7" stroke="#333" stroke-width="1.1" fill="none"/>
<path d="M12.3 0 L14.2 1.9 L7.6 8.5 L5 9.3 L5.8 6.7 Z" fill="#333"/></svg>
<svg class="abs" style="left:223px;top:341px" width="12" height="13" viewBox="0 0 12 13">
<path d="M3.5 2.3 V0.5 H7.5 V2.3" stroke="#333" stroke-width="1" fill="none"/>
<path d="M0 2.5 H11.7" stroke="#333" stroke-width="1.1"/>
<path d="M1.5 3 V10.7 Q1.5 11.5 2.3 11.5 H9.7 Q10.5 11.5 10.5 10.7 V3" stroke="#333" stroke-width="1" fill="none"/>
<path d="M3.5 4 V9.7 M5.5 4 V9.7 M7.5 4 V9.7" stroke="#333" stroke-width="0.9"/></svg>
<div class="abs" style="left:378px;top:209px;width:1px;height:151px;background:#e3e3e3;"></div>
<div class="abs" style="left:438px;top:209px;width:1px;height:151px;background:#e3e3e3;"></div>
<div class="abs" style="left:593px;top:209px;width:1px;height:151px;background:#e3e3e3;"></div>
<div class="abs" style="left:668px;top:209px;width:1px;height:151px;background:#e3e3e3;"></div>
<div class="abs" style="left:743px;top:209px;width:1px;height:151px;background:#e3e3e3;"></div>
<div class="abs" style="left:843px;top:209px;width:1px;height:151px;background:#e3e3e3;"></div>
<div class="abs" style="left:918px;top:209px;width:1px;height:151px;background:#e3e3e3;"></div>
<div class="abs" style="left:993px;top:209px;width:1px;height:151px;background:#e3e3e3;"></div>
<div class="abs" style="left:1093px;top:209px;width:1px;height:151px;background:#e3e3e3;"></div>
<div class="abs" style="left:1208px;top:209px;width:1px;height:151px;background:#e3e3e3;"></div>
<div class="abs" style="left:247px;top:209px;width:1px;height:541px;background:#e3e3e3;"></div>
<div class="abs" style="left:187px;top:750px;width:1392px;height:61px;background:#f4f4f4;"></div>
<div class="abs" style="left:187px;top:750px;width:1393px;height:1px;background:#d8d8dc;"></div>
<div class="abs" style="left:247px;top:751px;width:1px;height:60px;background:#d8d8dc;"></div>
<div class="abs" style="left:378px;top:751px;width:1px;height:60px;background:#d8d8dc;"></div>
<div class="abs" style="left:438px;top:751px;width:1px;height:60px;background:#d8d8dc;"></div>
<div class="abs" style="left:593px;top:751px;width:1px;height:60px;background:#d8d8dc;"></div>
<div class="abs" style="left:668px;top:751px;width:1px;height:60px;background:#d8d8dc;"></div>
<div class="abs" style="left:743px;top:751px;width:1px;height:60px;background:#d8d8dc;"></div>
<div class="abs" style="left:843px;top:751px;width:1px;height:60px;background:#d8d8dc;"></div>
<div class="abs" style="left:918px;top:751px;width:1px;height:60px;background:#d8d8dc;"></div>
<div class="abs" style="left:993px;top:751px;width:1px;height:60px;background:#d8d8dc;"></div>
<div class="abs" style="left:1093px;top:751px;width:1px;height:60px;background:#d8d8dc;"></div>
<div class="abs" style="left:1208px;top:751px;width:1px;height:60px;background:#d8d8dc;"></div>
<div class="abs" style="left:1560px;top:751px;width:1px;height:60px;background:#d8d8dc;"></div>
<div class="t" style="left:446px;top:776.27px;font-size:11.5px;color:#484b50;font-weight:bold;font-family:'Liberation Sans',sans-serif;">Total</div>
<div class="t" style="left:601px;top:776.27px;font-size:11.5px;color:#484b50;font-weight:bold;font-family:'Liberation Sans',sans-serif;">360.00</div>
<div class="t" style="left:851px;top:776.27px;font-size:11.5px;color:#484b50;font-weight:bold;font-family:'Liberation Sans',sans-serif;">10.00</div>
<div class="t" style="left:1101px;top:759.27px;font-size:11.5px;color:#484b50;font-weight:bold;font-family:'Liberation Sans',sans-serif;">Balance</div>
<div class="t" style="left:1101px;top:793.27px;font-size:11.5px;color:#484b50;font-weight:bold;font-family:'Liberation Sans',sans-serif;">Total Balance</div>
<div class="t" style="left:1215px;top:759.27px;font-size:11.5px;color:#484b50;font-weight:bold;font-family:'Liberation Sans',sans-serif;">350.00</div>
<div class="t" style="left:1215px;top:793.27px;font-size:11.5px;color:#484b50;font-weight:bold;font-family:'Liberation Sans',sans-serif;">540.00</div>
</body></html>
